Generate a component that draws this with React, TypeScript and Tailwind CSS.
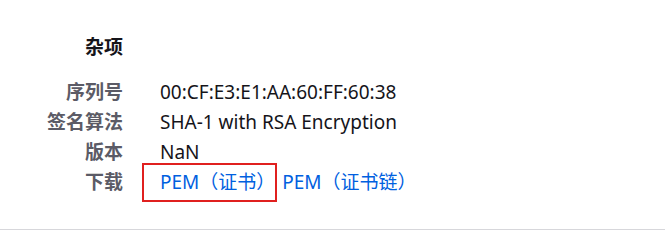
const cjk = "font-['Noto_Sans','Noto_Sans_CJK_SC',sans-serif]";

const rows: { label: string; value: string }[] = [
  { label: '序列号', value: '00:CF:E3:E1:AA:60:FF:60:38' },
  { label: '签名算法', value: 'SHA-1 with RSA Encryption' },
  { label: '版本', value: 'NaN' },
];

export default function App() {
  return (
    <div className={`h-[236px] w-[665px] bg-white text-[19px] ${cjk}`}>
      <div className="h-[230px] border-b border-[#d7d7db] pt-[32px]">
        <h2 className="w-[123px] text-right font-bold leading-[30px] text-[#15141a]">杂项</h2>
        <div className="mt-[15px] grid grid-cols-[123px_1fr] gap-x-[37px]">
          {rows.map((r) => (
            <div key={r.label} className="contents">
              <div className="text-right font-bold leading-[30px] text-[#5b5b66]">{r.label}</div>
              <div className="leading-[30px] text-[#15141a]">{r.value}</div>
            </div>
          ))}
          <div className="text-right font-bold leading-[30px] text-[#5b5b66]">下载</div>
          <div className="flex items-center leading-[30px] text-[#0060df]">
            <a href="#" className="-my-[5px] -ml-[18px] inline-block border-2 border-[#e0201f] pl-[16px] pr-0 leading-[35px]">
              PEM（证书）
            </a>
            <a href="#" className="ml-[5px]">PEM（证书链）</a>
          </div>
        </div>
      </div>
    </div>
  );
}
